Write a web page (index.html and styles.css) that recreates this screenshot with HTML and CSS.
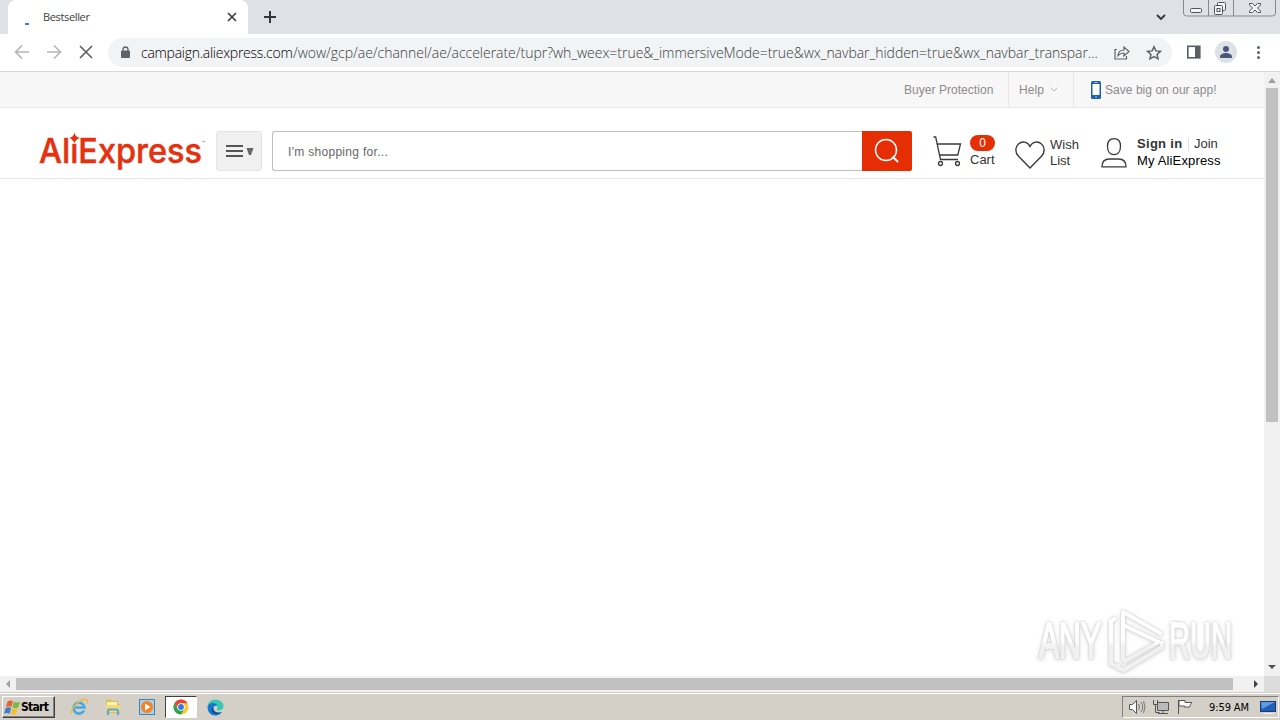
FILE: index.html
```html
<!DOCTYPE html>
<html>
<head lang="en">
    <meta charset="UTF-8">
    <title>Bestseller</title>
    <link rel="stylesheet" href="styles.css">
</head>
<body>
    <div id="tabs">
        <div class="tab">
            <span class="loading"></span>
            <span class="title">Bestseller</span>
            <svg width="10" height="10" viewBox="0 0 10 10"><path d="M1 1l8 8M9 1l-8 8" stroke="#3c4043" stroke-width="1.7"/></svg>
        </div>
        <svg class="plus" width="12" height="12" viewBox="0 0 12 12"><path d="M6 0v12M0 6h12" stroke="#35363a" stroke-width="2"/></svg>
        <svg class="down" width="10" height="7" viewBox="0 0 10 7"><path d="M1 1l4 4 4-4" fill="none" stroke="#35363a" stroke-width="1.8"/></svg>
        <svg class="win" width="97" height="18" viewBox="0 0 97 18">
            <path d="M.5 0v13q0 3 3 3h86q3 0 3-3V0M25.500 0v16M50.500 0v16" fill="none" stroke="#858991"/>
            <g fill="#f4f5f7" stroke="#51555e">
                <rect x="7.500" y="8.500" width="11" height="4" rx="1"/>
                <rect x="34.500" y="2.500" width="8" height="8" rx="1"/>
                <rect x="31.500" y="5.500" width="8" height="9" rx="1"/>
                <rect x="34" y="8.500" width="3" height="3"/>
                <path d="M66.500 3.500h3l2.500 2.500 2.500-2.500h3v1.500l-3 3 3 3v1.500h-3l-2.500-2.500-2.500 2.500h-3V11l3-3-3-3z"/>
            </g>
        </svg>
    </div>
    <div id="toolbar">
        <svg class="nav" width="108" height="37" viewBox="0 0 108 37" fill="none" stroke-width="1.7">
            <path d="M29 18H16M22 11.500L15.500 18l6.500 6.500M47 18h13M54 11.500l6.500 6.500-6.500 6.500" stroke="#b5b7ba"/>
            <path d="M80 12l12 12M92 12l-12 12" stroke="#5f6368"/>
        </svg>
        <div class="address">
            <svg class="lock" width="10" height="13" viewBox="0 0 10 13"><rect y="4.500" width="9" height="7.500" rx="1" fill="#5f6368"/><path d="M2 5V3.500a2.500 2.500 0 0 1 5 0V5" fill="none" stroke="#5f6368" stroke-width="1.300"/></svg>
            <span class="url"><b>campaign.aliexpress.com</b><span>/wow/gcp/ae/channel/ae/accelerate/tupr?wh_weex=true&amp;_immersiveMode=true&amp;wx_navbar_hidden=true&amp;wx_navbar_transpar...</span></span>
            <svg class="share" width="16" height="15" viewBox="0 0 16 15" fill="none" stroke="#5f6368" stroke-width="1.200"><path d="M3 4.500H1V14h11.500v-3M4 10.500c.3-3.500 2.500-5.500 6-5.500V2l5 4.500-5 4.500V8C7.500 8 5.500 8.800 4 10.500z"/></svg>
            <svg class="star" width="16" height="16" viewBox="0 0 16 16"><path d="M8 1.800l1.900 4.100 4.500.5-3.300 3 .9 4.400-4-2.200-4 2.200.9-4.400-3.300-3 4.500-.5z" fill="none" stroke="#5f6368" stroke-width="1.500"/></svg>
        </div>
        <svg class="tools" width="108" height="37" viewBox="0 0 108 37">
            <rect x="15.800" y="12.300" width="12" height="11.500" fill="#fff" stroke="#5b5d62" stroke-width="1.600"/>
            <path d="M23 12h5v12h-5z" fill="#5b5d62"/>
            <circle cx="54" cy="18" r="11" fill="#dee1e6"/>
            <circle cx="54" cy="15" r="3" fill="#4a5778"/>
            <path d="M48 24v-1.500c0-2.300 3.500-3.500 6-3.500s6 1.200 6 3.500V24z" fill="#4a5778"/>
            <g fill="#5f6368"><circle cx="86.500" cy="13.500" r="1.500"/><circle cx="86.500" cy="18.500" r="1.500"/><circle cx="86.500" cy="23.500" r="1.500"/></g>
        </svg>
    </div>

    <div id="main">
        <div id="page">
            <div class="topbar">
                <span class="protect">Buyer Protection</span>
                <span class="help">Help <svg width="8" height="5" viewBox="0 0 8 5"><path d="M.5.500L4 4 7.500.500" fill="none" stroke="#bbb"/></svg></span>
                <span class="app"><svg width="10" height="18" viewBox="0 0 10 18"><rect width="10" height="18" rx="1.500" fill="#1c62ad"/><path d="M1.500 3h7v11h-7z" fill="#fff"/><path d="M3.500 1.500h3M4 16h2" stroke="#a9c7e6"/></svg><em>Save big on our app!</em></span>
            </div>
            <div class="header">
                <svg class="logo" width="170" height="46" viewBox="0 0 170 46">
                    <text x="-1" y="31.500" textLength="163" lengthAdjust="spacingAndGlyphs">AliExpress</text>
                    <path d="M34.500 1.500q.8 4.700 5.500 5.500-4.700.8-5.500 5.500-.8-4.700-5.500-5.500 4.700-.8 5.500-5.500z" fill="#e43210"/>
                    <text class="tm" x="162" y="14">™</text>
                </svg>
                <div class="menu"><svg width="28" height="14" viewBox="0 0 28 14"><path d="M0 1h17M0 6h17M0 11h17" stroke="#555" stroke-width="2"/><path d="M20.500 3h7L25 10h-2z" fill="#666"/></svg></div>
                <div class="search">
                    <div class="input">I'm shopping for...</div>
                    <div class="btn"><svg width="26" height="26" viewBox="0 0 26 26" fill="none" stroke="#fff"><circle cx="12" cy="12" r="10.500" stroke-width="1.500"/><path d="M18.500 18.500l5.500 5.500" stroke-width="2"/></svg></div>
                </div>
                <svg class="cart" width="30" height="31" viewBox="0 0 30 31" fill="none" stroke="#3a3a3a" stroke-width="1.300"><path d="M.5 1h2.200L7.500 23.500H25M4.200 8h23.300l-2.700 11H6.700"/><circle cx="7.500" cy="27.500" r="2"/><circle cx="24.500" cy="27.500" r="2"/></svg>
                <div class="carttext"><i>0</i><span>Cart</span></div>
                <svg class="heart" width="30" height="28" viewBox="0 0 30 28"><path d="M15 27L3.500 15.200C-.5 11 .5 5.500 3.500 3 7-.2 12.500.5 15 5.500 17.500.5 23-.2 26.500 3c3 2.500 4 8 0 12.200z" fill="none" stroke="#3a3a3a" stroke-width="1.400"/></svg>
                <div class="wish">Wish<br>List</div>
                <svg class="user" width="26" height="31" viewBox="0 0 26 31" fill="none" stroke="#3a3a3a" stroke-width="1.300"><path d="M13 1.700c4 0 6.500 2.500 6.500 7.500 0 5.500-2.800 8.500-6.500 8.500s-6.500-3-6.500-8.500c0-5 2.500-7.500 6.500-7.500zM1 29.800c0-5 2.500-7.800 7.500-7.800h9c5 0 7.500 2.800 7.500 7.800z"/></svg>
                <div class="account">
                    <div><b>Sign in</b><u></u><span>Join</span></div>
                    <p>My AliExpress</p>
                </div>
            </div>
        </div>
        <div class="vscroll">
            <svg width="16" height="16" viewBox="0 0 16 16"><path d="M4 11l4-5 4 5z" fill="#a0a0a0"/></svg>
            <span></span>
            <svg class="end" width="16" height="16" viewBox="0 0 16 16"><path d="M4 5h8l-4 4z" fill="#505050"/></svg>
        </div>
    </div>
    <div class="hscroll">
        <svg width="16" height="16" viewBox="0 0 16 16"><path d="M10 4v8L6 8z" fill="#a0a0a0"/></svg>
        <span></span>
        <svg class="end" width="16" height="16" viewBox="0 0 16 16"><path d="M6 4v8l4-4z" fill="#404040"/></svg>
        <div class="corner"></div>
    </div>

    <div id="taskbar">
        <div class="start">
            <svg width="17" height="17" viewBox="0 0 18 17">
                <path d="M4 2q3-2 5.500 0L8 8Q5 6.500 2 8z" fill="#e8632c"/>
                <path d="M10.500 2.500Q13 4 17 2.500L15 8.500q-3 1.500-6 0z" fill="#78b843"/>
                <path d="M1.800 9Q5 7.500 7.500 9L6 15q-3-1.500-6 0z" fill="#3c7fc8"/>
                <path d="M8.700 9.500q3 1.500 6 0L13 15.500q-3 1.500-6 0z" fill="#f4bd35"/>
            </svg>
            <span>Start</span>
        </div>
        <div class="quick">
            <svg width="18" height="18" viewBox="0 0 18 18">
                <path d="M14 12.500A5.500 5.500 0 1 1 14.500 9.500H5" fill="none" stroke="#45a9e2" stroke-width="2.600"/>
                <path d="M2 15.500C-1 12 11-.5 16.500 1.500q1.500 1 0 4" fill="none" stroke="#edbb3d" stroke-width="1.400"/>
            </svg>
        </div>
        <div class="quick">
            <svg width="18" height="18" viewBox="0 0 18 18">
                <path d="M2 3V1.500h5L8 3h6v3h2v9H2z" fill="#e0bd55"/><path d="M3 4h10v4H3z" fill="#fff3b6"/>
                <path d="M2 7h14v7H2z" fill="#f1d878"/><path d="M4 17v-4.500q0-1 1-1h8q1 0 1 1V17" fill="none" stroke="#5aabd6" stroke-width="2.200"/>
            </svg>
        </div>
        <div class="quick">
            <svg width="18" height="18" viewBox="0 0 18 18">
                <rect x="1.500" y="1.500" width="15" height="15" fill="#a9d1ee" stroke="#4384b7"/>
                <circle cx="9" cy="9" r="6" fill="#f58220"/><path d="M7 5.500l5.500 3.500L7 12.500z" fill="#fff"/>
            </svg>
        </div>
        <div class="quick on">
            <svg width="16" height="16" viewBox="0 0 16 16">
                <circle cx="8" cy="8" r="7.500" fill="#fcc934"/>
                <path d="M1.500 4.250A7.500 7.500 0 0 1 14.500 4.250H8L4.750 10z" fill="#ea4335"/>
                <path d="M1.500 4.250A7.500 7.500 0 0 0 8 15.500L11.250 9.900 8 11.500 4.750 9.900z" fill="#28a350"/>
                <circle cx="8" cy="8" r="3.800" fill="#fff"/><circle cx="8" cy="8" r="2.900" fill="#3478e5"/>
            </svg>
        </div>
        <div class="quick">
            <svg width="17" height="17" viewBox="0 0 17 17">
                <path d="M.5 8C.5 3.500 4 .5 8.500.5s8 3 8 6.500c0 3-2.500 4.500-5 4.500-1.500 0-2.200-.8-1.500-1.500 1.500-3-1-5-4-5C3.500 5 1.500 6 .5 8z" fill="#38c7b2"/>
                <path d="M.5 8c1-3 3-4 5.500-4 2 0 4 1.200 4.500 3-3-1-4.500.8-4 3 .7 3 4.500 4.500 8.500 2.800-1.300 2.400-3.700 3.700-6.500 3.700-4.500 0-8-3.500-8-8.500z" fill="#1476cd"/>
                <path d="M6.500 8.500c-1 3 2 6.500 7 5-3.500 3-9 1-9-3 0-1 .8-1.800 2-2z" fill="#124a8c"/>
            </svg>
        </div>
        <div class="tray">
            <svg width="87" height="18" viewBox="0 0 87 18" fill="#fff" stroke="#555">
                <path d="M6.500 6.500h3l4-4v13l-4-4h-3z"/><path d="M15.500 6q2 3 0 6M18 4q3.500 5 0 10M20.500 3q3 6 0 12" fill="none" stroke="#777"/>
                <path d="M34.500 4.500h11v8h-11z" fill="#bbb"/><path d="M35 15.500h10M40 13v2M30.500 2v4.500h4V2M32.500 6.500v8h4" fill="none"/>
                <path d="M55.500 2v14M56 2.500h6v2h7c-2 1-1.500 3-2.500 4.500h-5v-1H56z"/>
            </svg>
            <span>9:59 AM</span>
            <svg class="desk" width="17" height="15" viewBox="0 0 17 15"><rect x=".5" y="1.500" width="15" height="10" fill="#245fb5" stroke="#163b78"/><path d="M1 2h14L2 9z" fill="#5b9ce2"/><path d="M3 13.500h11" stroke="#eee"/></svg>
        </div>
    </div>

    <svg id="watermark" width="248" height="70" viewBox="0 0 248 70">
        <defs>
            <linearGradient id="fade" gradientUnits="userSpaceOnUse" x1="0" y1="10" x2="0" y2="60">
                <stop offset="0.5" stop-color="#fff"/>
                <stop offset="0.6" stop-color="#efefef"/>
            </linearGradient>
        </defs>
        <text x="7" y="52" textLength="62" lengthAdjust="spacingAndGlyphs">ANY</text>
        <g fill="none" stroke="url(#fade)" stroke-width="4" stroke-linejoin="round">
            <path d="M91 54V6l39 22"/>
            <path d="M91 19l36 17-36 20"/>
            <path d="M84 12l-5 3v43l6 2"/>
            <path d="M86 58v4l6 2 38-23v-6"/>
        </g>
        <text x="137" y="52" textLength="63" lengthAdjust="spacingAndGlyphs">RUN</text>
    </svg>
</body>
</html>
```
FILE: styles.css
```css
*{
    padding: 0;
    margin: 0;
    box-sizing: border-box;
}
body{
    width: 1280px;
    height: 720px;
    overflow: hidden;
    position: relative;
    display: flex;
    flex-direction: column;
    background: #fff;
    font-family: "Liberation Sans", Arial, sans-serif;
}
svg{
    display: block;
    flex: none;
}
i, em, u{
    font-style: normal;
    text-decoration: none;
}
#tabs{
    height: 34px;
    display: flex;
    background: #dee1e6;
}
.tab{
    width: 240px;
    height: 34px;
    margin-left: 8px;
    padding: 0 11px 0 17px;
    display: flex;
    align-items: center;
    background: #fff;
    border-radius: 8px 8px 0 0;
}
.loading{
    width: 4px;
    height: 2px;
    margin: 13px 14px 0 0;
    background: #3f7cc4;
}
.title{
    flex: 1;
    margin-top: -2px;
    font: 11px "Open Sans", sans-serif;
    letter-spacing: -0.35px;
    color: #3c4043;
}
.plus{
    margin: 11px 0 0 16px;
}
.down{
    margin: 14px 17px 0 auto;
}
#toolbar{
    height: 38px;
    display: flex;
    border-bottom: 1px solid #d5d7d9;
}
.address{
    width: 1064px;
    height: 29px;
    margin-top: 4px;
    padding-left: 13px;
    display: flex;
    align-items: center;
    background: #f1f3f4;
    border-radius: 15px;
}
.url{
    width: 960px;
    margin-left: 10px;
    font: 300 14px "Open Sans", sans-serif;
    letter-spacing: -0.03px;
    white-space: nowrap;
    display: flex;
    color: #3a3d40;
}
.url b{
    width: 152px;
    font-weight: 300;
    letter-spacing: -0.27px;
    color: #000;
}
.share{
    margin-left: 13px;
}
.star{
    margin-left: 16px;
}
#main{
    height: 604px;
    display: flex;
}
#page{
    width: 1264px;
}
.topbar{
    height: 36px;
    display: flex;
    justify-content: flex-end;
    background: #f7f7f7;
    border-bottom: 1px solid #e8e8e8;
    font-size: 12px;
    line-height: 36px;
    color: #8b8b8b;
    letter-spacing: 0.04px;
    white-space: nowrap;
}
.protect{
    width: 104px;
}
.help{
    width: 65px;
    padding-left: 10px;
    border-left: 1px solid #e6e6e6;
    display: flex;
    align-items: center;
    gap: 6px;
}
.app{
    width: 191px;
    padding-left: 17px;
    border-left: 1px solid #e6e6e6;
    display: flex;
    align-items: center;
    gap: 4px;
}
.header{
    height: 71px;
    padding: 23px 0 0 40px;
    display: flex;
    align-items: flex-start;
    border-bottom: 1px solid #e4e4e4;
    font-size: 13px;
    line-height: 16px;
    color: #333;
}
.logo{
    width: 170px;
    margin-right: 6px;
    overflow: visible;
}
.logo text{
    font: 500 34px Inter, sans-serif;
    fill: #e43210;
    stroke: #e43210;
    stroke-width: 0.5px;
}
.logo .tm{
    font-size: 5px;
    stroke: none;
}
.menu{
    width: 46px;
    height: 40px;
    padding: 13px 0 0 9px;
    background: #f0f0f0;
    border: 1px solid #e4e4e4;
    border-radius: 3px;
}
.search{
    width: 640px;
    height: 40px;
    margin-left: 10px;
    display: flex;
}
.input{
    flex: 1;
    padding-left: 15px;
    border: 1px solid #bfbfbf;
    border-right: 0;
    border-radius: 3px 0 0 3px;
    font-size: 12px;
    line-height: 40px;
    letter-spacing: 0.3px;
    color: #666;
}
.btn{
    width: 50px;
    padding: 7px 12px;
    background: #e62e04;
    border-radius: 0 2px 2px 0;
}
.cart{
    margin: 5px 0 0 21px;
}
.carttext{
    width: 38px;
    margin: 4px 0 0 7px;
}
.carttext i{
    display: block;
    width: 25px;
    height: 16px;
    border-radius: 8px;
    background: #e62e04;
    color: #fff;
    font-size: 12px;
    text-align: center;
}
.carttext span{
    display: block;
    margin-top: 1px;
}
.heart{
    margin: 10px 0 0 7px;
}
.wish{
    width: 36px;
    margin: 6px 0 0 5px;
}
.user{
    margin: 6px 0 0 15px;
}
.account{
    margin: 5px 0 0 10px;
    white-space: nowrap;
}
.account div{
    display: flex;
    align-items: center;
}
.account b{
    width: 46px;
    letter-spacing: 0.3px;
}
.account u{
    width: 1px;
    height: 13px;
    margin: 0 5px;
    background: #e0e0e0;
}
.account p{
    margin-top: 1px;
    letter-spacing: 0.15px;
    color: #000;
}
.vscroll{
    width: 16px;
    display: flex;
    flex-direction: column;
    background: #f1f1f1;
}
.vscroll span{
    width: 12px;
    height: 334px;
    margin-left: 2px;
    background: #c1c1c1;
}
.vscroll .end{
    margin-top: auto;
}
.hscroll{
    height: 16px;
    display: flex;
    background: #f1f1f1;
}
.hscroll span{
    width: 1217px;
    height: 12px;
    margin-top: 2px;
    background: #c1c1c1;
}
.hscroll .end{
    margin-left: auto;
}
.corner{
    width: 16px;
    background: #dcdcdc;
}
#taskbar{
    height: 28px;
    padding: 2px 1px 0 1px;
    display: flex;
    background: #d4d0c8;
    border-top: 1px solid #d4d0c8;
    box-shadow: inset 0 1px #fff;
}
.start{
    width: 53px;
    height: 22px;
    margin: 1px 8px 0 1px;
    padding: 1px;
    display: flex;
    align-items: center;
    border: 1px solid;
    border-color: #fff #404040 #404040 #fff;
    box-shadow: inset -1px -1px #808080;
    font: bold 12px "DejaVu Sans Condensed", "DejaVu Sans", sans-serif;
    letter-spacing: -0.7px;
    color: #000;
}
.quick{
    width: 32px;
    height: 22px;
    margin: 1px 2px 0 0;
    display: flex;
    align-items: center;
    justify-content: center;
}
.on{
    background: #fff;
    border: 1px solid;
    border-color: #404040 #fff #fff #404040;
}
.tray{
    width: 157px;
    height: 22px;
    margin: 1px 0 0 auto;
    display: flex;
    align-items: center;
    border: 1px solid;
    border-color: #808080 #fff #fff #808080;
    font: 11px "DejaVu Sans Condensed", "DejaVu Sans", sans-serif;
    letter-spacing: -0.1px;
    white-space: nowrap;
    color: #000;
}
.tray span{
    width: 51px;
    margin-left: -1px;
}
#watermark{
    position: absolute;
    left: 1032px;
    top: 606px;
    filter: drop-shadow(0 0 1px #bbb) drop-shadow(0 1px 2px #ddd);
    opacity: 0.85;
}
#watermark text{
    font: 50px "Liberation Sans", sans-serif;
    fill: url(#fade);
    stroke: url(#fade);
    stroke-width: 2px;
}
```
